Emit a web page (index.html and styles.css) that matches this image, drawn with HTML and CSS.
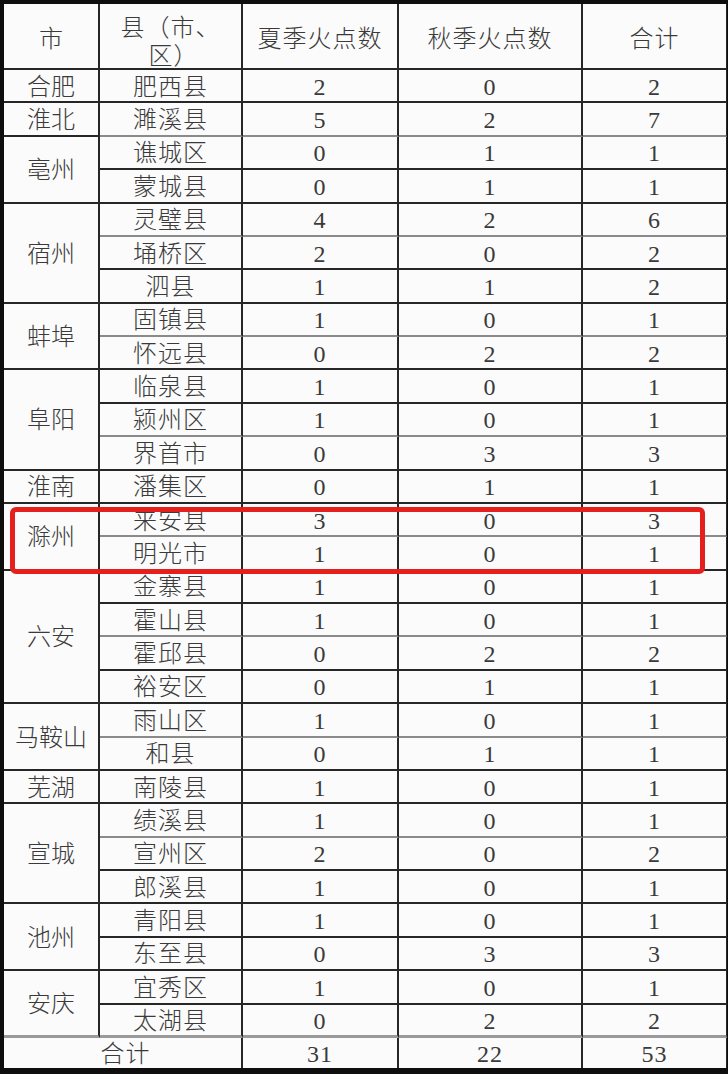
FILE: index.html
```html
<!DOCTYPE html>
<html lang="zh">
<head>
<meta charset="utf-8">
<link rel="stylesheet" href="styles.css">
</head>
<body>
<div class="frame">
<div class="sheet">
  <div class="cell h c1">市</div>
  <div class="cell h c2 two"><span>县（市、</span><span>区）</span></div>
  <div class="cell h c3">夏季火点数</div>
  <div class="cell h c4">秋季火点数</div>
  <div class="cell h c5">合计</div>

  <div class="cell c1">合肥</div>
  <div class="cell c2">肥西县</div><div class="cell c3">2</div><div class="cell c4">0</div><div class="cell c5">2</div>

  <div class="cell c1">淮北</div>
  <div class="cell c2 lg">濉溪县</div><div class="cell c3 lg">5</div><div class="cell c4 lg">2</div><div class="cell c5 lg">7</div>

  <div class="cell c1 s2">亳州</div>
  <div class="cell c2">谯城区</div><div class="cell c3">0</div><div class="cell c4">1</div><div class="cell c5">1</div>
  <div class="cell c2">蒙城县</div><div class="cell c3">0</div><div class="cell c4">1</div><div class="cell c5">1</div>

  <div class="cell c1 s3">宿州</div>
  <div class="cell c2 lg">灵璧县</div><div class="cell c3 lg">4</div><div class="cell c4 lg">2</div><div class="cell c5 lg">6</div>
  <div class="cell c2">埇桥区</div><div class="cell c3">2</div><div class="cell c4">0</div><div class="cell c5">2</div>
  <div class="cell c2">泗县</div><div class="cell c3">1</div><div class="cell c4">1</div><div class="cell c5">2</div>

  <div class="cell c1 s2">蚌埠</div>
  <div class="cell c2 lg">固镇县</div><div class="cell c3 lg">1</div><div class="cell c4 lg">0</div><div class="cell c5 lg">1</div>
  <div class="cell c2">怀远县</div><div class="cell c3">0</div><div class="cell c4">2</div><div class="cell c5">2</div>

  <div class="cell c1 s3">阜阳</div>
  <div class="cell c2">临泉县</div><div class="cell c3">1</div><div class="cell c4">0</div><div class="cell c5">1</div>
  <div class="cell c2 lg">颍州区</div><div class="cell c3 lg">1</div><div class="cell c4 lg">0</div><div class="cell c5 lg">1</div>
  <div class="cell c2">界首市</div><div class="cell c3">0</div><div class="cell c4">3</div><div class="cell c5">3</div>

  <div class="cell c1">淮南</div>
  <div class="cell c2">潘集区</div><div class="cell c3">0</div><div class="cell c4">1</div><div class="cell c5">1</div>

  <div class="cell c1 s2">滁州</div>
  <div class="cell c2 lg">来安县</div><div class="cell c3 lg">3</div><div class="cell c4 lg">0</div><div class="cell c5 lg">3</div>
  <div class="cell c2">明光市</div><div class="cell c3">1</div><div class="cell c4">0</div><div class="cell c5">1</div>

  <div class="cell c1 s4">六安</div>
  <div class="cell c2">金寨县</div><div class="cell c3">1</div><div class="cell c4">0</div><div class="cell c5">1</div>
  <div class="cell c2 lg">霍山县</div><div class="cell c3 lg">1</div><div class="cell c4 lg">0</div><div class="cell c5 lg">1</div>
  <div class="cell c2">霍邱县</div><div class="cell c3">0</div><div class="cell c4">2</div><div class="cell c5">2</div>
  <div class="cell c2">裕安区</div><div class="cell c3">0</div><div class="cell c4">1</div><div class="cell c5">1</div>

  <div class="cell c1 s2">马鞍山</div>
  <div class="cell c2 lg">雨山区</div><div class="cell c3 lg">1</div><div class="cell c4 lg">0</div><div class="cell c5 lg">1</div>
  <div class="cell c2">和县</div><div class="cell c3">0</div><div class="cell c4">1</div><div class="cell c5">1</div>

  <div class="cell c1">芜湖</div>
  <div class="cell c2">南陵县</div><div class="cell c3">1</div><div class="cell c4">0</div><div class="cell c5">1</div>

  <div class="cell c1 s3">宣城</div>
  <div class="cell c2 lg">绩溪县</div><div class="cell c3 lg">1</div><div class="cell c4 lg">0</div><div class="cell c5 lg">1</div>
  <div class="cell c2">宣州区</div><div class="cell c3">2</div><div class="cell c4">0</div><div class="cell c5">2</div>
  <div class="cell c2">郎溪县</div><div class="cell c3">1</div><div class="cell c4">0</div><div class="cell c5">1</div>

  <div class="cell c1 s2">池州</div>
  <div class="cell c2">青阳县</div><div class="cell c3">1</div><div class="cell c4">0</div><div class="cell c5">1</div>
  <div class="cell c2">东至县</div><div class="cell c3">0</div><div class="cell c4">3</div><div class="cell c5">3</div>

  <div class="cell c1 s2 pre">安庆</div>
  <div class="cell c2">宜秀区</div><div class="cell c3">1</div><div class="cell c4">0</div><div class="cell c5">1</div>
  <div class="cell c2 pre">太湖县</div><div class="cell c3 pre">0</div><div class="cell c4 pre">2</div><div class="cell c5 pre">2</div>

  <div class="cell tot c12">合计</div>
  <div class="cell tot c3">31</div>
  <div class="cell tot c4">22</div>
  <div class="cell tot c5">53</div>
</div>
<div class="mark"></div>
</div>
</body>
</html>
```

FILE: styles.css
```css
html, body {
  margin: 0;
  padding: 0;
  background: #0e0e0e;
}
body {
  width: 728px;
  height: 1074px;
  overflow: hidden;
}
.frame {
  position: relative;
  padding: 4px 1px 6px 4px;
}
.sheet {
  display: grid;
  grid-template-columns: 96px 143px 156px 184px 144px;
  grid-template-rows: 66px repeat(29, 33.38px) 30px;
  background: #fbfbfb;
  font-family: "Liberation Serif", "Noto Sans CJK SC", serif;
  font-size: 24px;
  font-weight: 300;
  color: #3a3a3a;
}
.cell {
  box-sizing: border-box;
  display: flex;
  align-items: center;
  justify-content: center;
  border-right: 2px solid #262626;
  border-bottom: 2px solid #262626;
  letter-spacing: 1px;
  line-height: 1;
  white-space: nowrap;
  padding-top: 2px;
}
.c1 { grid-column: 1; letter-spacing: 0; }
.c2 { grid-column: 2; }
.c3 { grid-column: 3; }
.c4 { grid-column: 4; }
.c5 { grid-column: 5; border-right-width: 1px; }
.c12 { grid-column: 1 / span 2; padding-left: 6px; }
.s2 { grid-row: span 2; }
.s3 { grid-row: span 3; }
.s4 { grid-row: span 4; }
.h { padding-top: 6px; }
.two {
  flex-direction: column;
  line-height: 28px;
  padding-top: 12px;
  text-align: center;
}
.two span { display: block; }
.two span + span { padding-left: 6px; }
.lg { border-bottom-color: #8a8a8a; }
.pre { border-bottom: 3px solid #9a9a9a; }
.tot { border-bottom: none; }
.mark {
  position: absolute;
  left: 10px;
  top: 507px;
  width: 695px;
  height: 67px;
  box-sizing: border-box;
  border: 5px solid #e51f1b;
  border-radius: 6px;
}
```
